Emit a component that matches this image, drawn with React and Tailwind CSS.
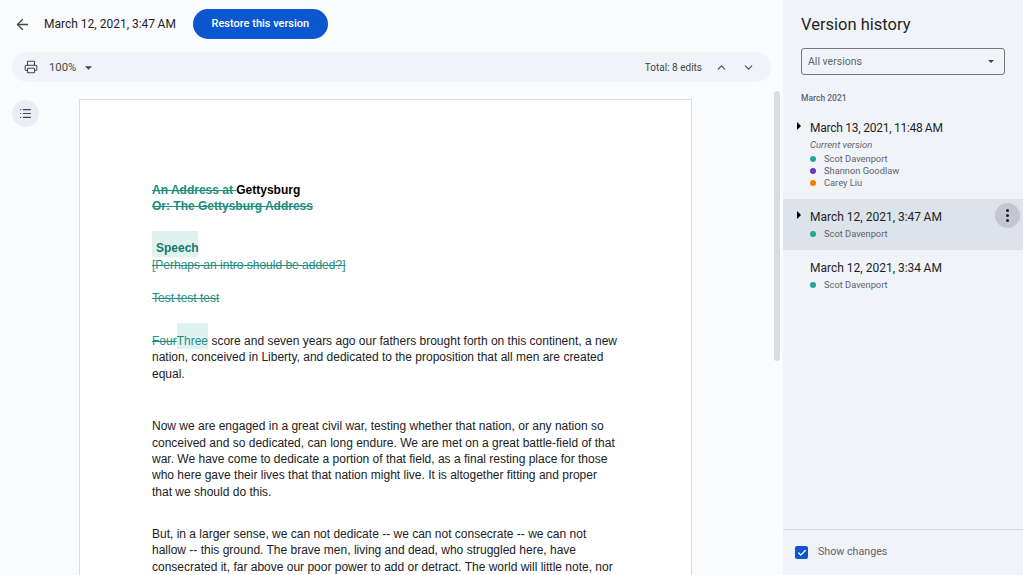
import React from "react";
import { ArrowLeft, Printer, ChevronUp, ChevronDown, List, Check } from "lucide-react";

const ui = "font-['Roboto',sans-serif]";

function Caret({ className = "" }) {
  return (
    <svg viewBox="0 0 8 4" className={className}>
      <path d="M0 0h8L4 4z" fill="currentColor" />
    </svg>
  );
}

function Side() {
  return (
    <svg viewBox="0 0 4 8" className="w-[4px] h-[8px] text-black">
      <path d="M0 0l4 4-4 4z" fill="currentColor" />
    </svg>
  );
}

function Person({ color, name }) {
  return (
    <div className="flex items-center h-[12px] text-[9.3px] text-[#5f6368]">
      <span className={`w-[6px] h-[6px] rounded-full mr-[8px] ${color}`} />
      <span>{name}</span>
    </div>
  );
}

function Line({ children, className = "" }) {
  return <div className={`h-[16.4px] leading-[16.4px] whitespace-nowrap ${className}`}>{children}</div>;
}

const del = "text-[#1e8e7e] line-through";

export default function App() {
  return (
    <div className={`w-[1023px] h-[575px] overflow-hidden flex bg-[#f9fbfd] ${ui}`}>
      <main className="w-[783px] h-full flex flex-col shrink-0 overflow-hidden">
        <header className="h-[52px] shrink-0 flex items-center pl-[14px] pb-[4px]">
          <ArrowLeft size={17} strokeWidth={1.8} className="text-[#444746]" />
          <span className="ml-[13px] text-[12px] text-[#1f1f1f]">March 12, 2021, 3:47{"\u2009"}AM</span>
          <button className="ml-[17px] w-[135px] h-[30px] rounded-full bg-[#0b57d0] text-white text-[11px] font-medium">
            Restore this version
          </button>
        </header>
        <div className="mx-[12px] w-[759px] h-[30px] shrink-0 rounded-full bg-[#f0f4f9] flex items-center pl-[12px] pr-[16px] text-[#444746]">
          <Printer size={14} strokeWidth={1.8} />
          <span className="ml-[11px] mt-[2px] text-[11.3px]">100%</span>
          <Caret className="ml-[9px] mt-[2px] w-[7px] h-[4px]" />
          <span className="ml-auto text-[10px]">Total: 8 edits</span>
          <ChevronUp size={13} strokeWidth={2} className="ml-[13px]" />
          <ChevronDown size={13} strokeWidth={2} className="ml-[14px]" />
        </div>
        <div className="flex flex-1 min-h-0 mt-[9px] items-start">
          <div className="w-[79px] shrink-0 pl-[12px] pt-[9px]">
            <div className="w-[27px] h-[27px] rounded-full bg-[#e9eef6] flex items-center justify-center text-[#444746]">
              <List size={13} strokeWidth={2.2} />
            </div>
          </div>
          <div className="w-[613px] h-[800px] shrink-0 mt-[8px] border border-[#dadce0] bg-white pl-[72px] pt-[82px] font-['Liberation_Sans',sans-serif] text-[12px] text-[#202124]">
            <Line className="font-bold text-black"><span className={del}>An Address at </span>Gettysburg</Line>
            <Line className={`font-bold ${del}`}>Or: The Gettysburg Address</Line>
            <div className="mt-[16px] w-[46px] h-[26px] bg-[#e0f2f0] flex items-end pl-[4px] font-bold text-[#137a6c] leading-[16.4px]">Speech</div>
            <Line className={del}>[Perhaps an intro should be added?]</Line>
            <Line className={`mt-[16.4px] ${del}`}>Test test test</Line>
            <Line className="mt-[27px]">
              <span className={del}>Four</span>
              <span className="relative text-[#1e8e7e]">
                <span className="absolute left-0 top-[-11px] w-full h-[26px] bg-[#e0f2f0]" />
                <span className="relative">Three</span>
              </span>{" "}
              score and seven years ago our fathers brought forth on this continent, a new
            </Line>
            <Line>nation, conceived in Liberty, and dedicated to the proposition that all men are created</Line>
            <Line>equal.</Line>
            <Line className="mt-[36px]">Now we are engaged in a great civil war, testing whether that nation, or any nation so</Line>
            <Line>conceived and so dedicated, can long endure. We are met on a great battle-field of that</Line>
            <Line>war. We have come to dedicate a portion of that field, as a final resting place for those</Line>
            <Line>who here gave their lives that that nation might live. It is altogether fitting and proper</Line>
            <Line>that we should do this.</Line>
            <Line className="mt-[26px]">But, in a larger sense, we can not dedicate -- we can not consecrate -- we can not</Line>
            <Line>hallow -- this ground. The brave men, living and dead, who struggled here, have</Line>
            <Line>consecrated it, far above our poor power to add or detract. The world will little note, nor</Line>
          </div>
          <div className="ml-[82px] w-[6px] h-[270px] rounded-full bg-[#dadce0] shrink-0" />
        </div>
      </main>

      <aside className="w-[240px] h-full bg-[#f0f4f9] flex flex-col shrink-0">
        <h1 className="mt-[14px] ml-[18px] text-[16.5px] leading-[22px] text-[#1f1f1f]">Version history</h1>
        <div className="mt-[12px] ml-[18px] w-[204px] h-[27px] rounded-[3px] border border-[#747775] flex items-center pl-[6px] pr-[10px] text-[10.5px] text-[#5f6368]">
          <span>All versions</span>
          <Caret className="ml-auto w-[6px] h-[3px] text-[#444746]" />
        </div>
        <div className="mt-[17px] ml-[18px] text-[8.5px] leading-[12px] font-medium text-[#5f6368]">March 2021</div>

        <div className="mt-[16px] h-[78px] pl-[14px] flex">
          <div className="pt-[2px] w-[13px]"><Side /></div>
          <div>
            <div className="text-[12px] leading-[16px] text-[#1f1f1f] tracking-[-0.25px]">March 13, 2021, 11:48{"\u2009"}AM</div>
            <div className="mt-[3px] text-[9.5px] leading-[12px] italic text-[#5f6368]">Current version</div>
            <div className="mt-[2px]">
              <Person color="bg-[#26a69a]" name="Scot Davenport" />
              <Person color="bg-[#673ab7]" name="Shannon Goodlaw" />
              <Person color="bg-[#f57c00]" name="Carey Liu" />
            </div>
          </div>
        </div>

        <div className="mt-[1px] h-[51px] bg-[#dde3ea] pl-[14px] pt-[10px] pr-[4px] flex relative">
          <div className="pt-[2px] w-[13px]"><Side /></div>
          <div>
            <div className="text-[12px] leading-[16px] text-[#1f1f1f]">March 12, 2021, 3:47{"\u2009"}AM</div>
            <div className="mt-[3px]"><Person color="bg-[#26a69a]" name="Scot Davenport" /></div>
          </div>
          <div className="absolute right-[3px] top-[4px] w-[25px] h-[25px] rounded-full bg-[#c4c7cf] flex flex-col items-center justify-center gap-[2px]">
            <span className="w-[3px] h-[3px] rounded-full bg-[#1f1f1f]" />
            <span className="w-[3px] h-[3px] rounded-full bg-[#1f1f1f]" />
            <span className="w-[3px] h-[3px] rounded-full bg-[#1f1f1f]" />
          </div>
        </div>

        <div className="pl-[27px] pt-[10px]">
          <div className="text-[12px] leading-[16px] text-[#1f1f1f]">March 12, 2021, 3:34{"\u2009"}AM</div>
          <div className="mt-[3px]"><Person color="bg-[#26a69a]" name="Scot Davenport" /></div>
        </div>

        <div className="mt-auto h-[46px] border-t border-[#dadce0] flex items-center pl-[12px]">
          <span className="w-[13px] h-[13px] rounded-[2px] bg-[#0b57d0] flex items-center justify-center">
            <Check size={10} strokeWidth={3} className="text-white" />
          </span>
          <span className="ml-[10px] text-[10.7px] text-[#5f6368]">Show changes</span>
        </div>
      </aside>
    </div>
  );
}
